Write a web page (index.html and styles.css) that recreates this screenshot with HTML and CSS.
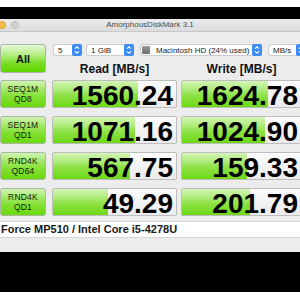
FILE: index.html
```html
<!DOCTYPE html>
<html>
<head>
<meta charset="utf-8">
<link rel="stylesheet" href="styles.css">
</head>
<body>
<div class="top-white"></div>
<div class="black-bar"></div>
<div class="window">
  <div class="titlebar">
    <div class="lights"><span class="light yellow"></span><span class="light gray"></span></div>
    <div class="title">AmorphousDiskMark 3.1</div>
  </div>
  <div class="content">
    <div class="head">
      <div class="all">All</div>
      <div class="controls">
        <div class="selects">
          <div class="sel s-count"><span class="sel-text">5</span><svg class="step" viewBox="0 0 10 12"><rect x="0" y="0" width="10" height="12" rx="2" fill="#3b8cf6"/><path d="M3 4.6 L5 2.8 L7 4.6 M3 7.4 L5 9.2 L7 7.4" fill="none" stroke="#fff" stroke-width="1.1"/></svg></div>
          <div class="sel s-size"><span class="sel-text">1 GiB</span><svg class="step" viewBox="0 0 10 12"><rect x="0" y="0" width="10" height="12" rx="2" fill="#3b8cf6"/><path d="M3 4.6 L5 2.8 L7 4.6 M3 7.4 L5 9.2 L7 7.4" fill="none" stroke="#fff" stroke-width="1.1"/></svg></div>
          <div class="sel s-disk"><span class="disk-icon"></span><span class="sel-text">Macintosh HD (24% used)</span><svg class="step" viewBox="0 0 10 12"><rect x="0" y="0" width="10" height="12" rx="2" fill="#3b8cf6"/><path d="M3 4.6 L5 2.8 L7 4.6 M3 7.4 L5 9.2 L7 7.4" fill="none" stroke="#fff" stroke-width="1.1"/></svg></div>
          <div class="sel s-unit"><span class="sel-text">MB/s</span><svg class="step" viewBox="0 0 10 12"><rect x="0" y="0" width="10" height="12" rx="2" fill="#3b8cf6"/><path d="M3 4.6 L5 2.8 L7 4.6 M3 7.4 L5 9.2 L7 7.4" fill="none" stroke="#fff" stroke-width="1.1"/></svg></div>
        </div>
        <div class="headers"><div>Read [MB/s]</div><div>Write [MB/s]</div></div>
      </div>
    </div>
    <div class="grid">
      <div class="label">SEQ1M<br>QD8</div>
      <div class="val"><div class="bar" style="width:85px"></div><span class="num">1560.24</span></div>
      <div class="val"><div class="bar" style="width:86px"></div><span class="num">1624.78</span></div>

      <div class="label">SEQ1M<br>QD1</div>
      <div class="val"><div class="bar" style="width:82px"></div><span class="num">1071.16</span></div>
      <div class="val"><div class="bar" style="width:83px"></div><span class="num">1024.90</span></div>

      <div class="label">RND4K<br>QD64</div>
      <div class="val"><div class="bar" style="width:77px"></div><span class="num">567.75</span></div>
      <div class="val"><div class="bar" style="width:65px"></div><span class="num">159.33</span></div>

      <div class="label">RND4K<br>QD1</div>
      <div class="val"><div class="bar" style="width:55px"></div><span class="num">49.29</span></div>
      <div class="val"><div class="bar" style="width:68px"></div><span class="num">201.79</span></div>
    </div>
    <div class="field">Force MP510 / Intel Core i5-4278U</div>
  </div>
</div>
<div class="desk"></div>
</body>
</html>
```
FILE: styles.css
```css
html, body {
  margin: 0;
  padding: 0;
}
body {
  width: 300px;
  height: 300px;
  overflow: hidden;
  background: #fff;
  font-family: "Liberation Sans", Arial, sans-serif;
}
.top-white { height: 7px; }
.black-bar { height: 12px; background: #000; }
.window {
  background: #ececec;
  width: 300px;
  overflow: hidden;
}
.titlebar {
  height: 13px;
  box-sizing: border-box;
  display: grid;
  align-items: center;
  background: linear-gradient(#ebebeb, #dcdcdc);
  border-bottom: 1px solid #c8c8c8;
}
.titlebar > * { grid-area: 1 / 1; }
.lights {
  display: flex;
  gap: 5px;
  margin-left: -2px;
  justify-self: start;
}
.light {
  width: 8px;
  height: 8px;
  border-radius: 50%;
  box-sizing: border-box;
}
.yellow { background: #f6bd4c; border: 1px solid #e0a332; }
.gray { background: #d2d2d2; border: 1px solid #bfbfbf; }
.title {
  justify-self: center;
  font-size: 8px;
  line-height: 12px;
  color: #4b4b4b;
}
.content {
  padding-top: 12px;
  padding-bottom: 14px;
}
.head {
  display: grid;
  grid-template-columns: 48px 1fr;
  column-gap: 4px;
  height: 36px;
}
.all {
  width: 46px;
  height: 29px;
  box-sizing: border-box;
  border: 1px solid #a8b8a0;
  border-radius: 3px;
  background: linear-gradient(#e6f9d8 0%, #b6ee86 35%, #76dc1e 70%, #5fd400 100%);
  display: flex;
  align-items: center;
  justify-content: center;
  font-weight: bold;
  font-size: 11px;
  color: #111;
}
.controls {
  display: flex;
  flex-direction: column;
}
.selects {
  display: flex;
  height: 12px;
  margin-left: 1px;
}
.sel {
  height: 12px;
  box-sizing: border-box;
  background: #fff;
  border: 1px solid #cdcdcd;
  border-right: none;
  border-radius: 3px;
  display: flex;
  align-items: center;
  font-size: 8px;
  color: #222;
  flex: none;
}
.sel-text {
  flex: 1;
  padding-left: 4px;
  white-space: nowrap;
}
.step {
  width: 10px;
  height: 12px;
  flex: none;
  margin-top: -1px;
  margin-bottom: -1px;
}
.s-count { width: 29px; }
.s-size { width: 48px; margin-left: 4px; }
.s-disk { width: 122px; margin-left: 6px; }
.s-unit { width: 38px; margin-left: 6px; }
.s-disk .sel-text { padding-left: 6px; }
.disk-icon {
  width: 8px;
  height: 8px;
  margin-left: 1px;
  background: linear-gradient(#9a9a9a, #6d6d6d);
  border-radius: 1px;
  flex: none;
}
.headers {
  display: grid;
  grid-template-columns: 125px 121px;
  column-gap: 4px;
  margin-top: 6px;
  font-weight: bold;
  font-size: 12px;
  line-height: 14px;
  color: #111;
  text-align: center;
}
.grid {
  display: grid;
  grid-template-columns: 48px 125px 121px;
  column-gap: 4px;
  row-gap: 8px;
  grid-auto-rows: 28px;
}
.label {
  width: 46px;
  box-sizing: border-box;
  border: 1px solid #a9b8a2;
  border-radius: 3px;
  background: linear-gradient(#d2f4b4 0%, #a6e970 30%, #84e034 60%, #6ad810 100%);
  font-size: 8.5px;
  line-height: 10px;
  letter-spacing: 0.2px;
  color: #14220a;
  text-align: center;
  display: flex;
  align-items: center;
  justify-content: center;
}
.val {
  display: grid;
  box-sizing: border-box;
  border: 1px solid #bdbdbd;
  border-radius: 2px;
  background: linear-gradient(#fbfbfb, #ebebeb);
}
.val > * { grid-area: 1 / 1; }
.bar {
  justify-self: start;
  height: 100%;
  background: linear-gradient(#d4f4b8 0%, #b2ec80 30%, #8ee246 55%, #6ed816 100%);
}
.num {
  justify-self: end;
  align-self: start;
  font-weight: bold;
  font-size: 28px;
  line-height: 22px;
  padding-top: 4px;
  padding-right: 3px;
  color: #000;
}
.field {
  margin-top: 5px;
  height: 17px;
  box-sizing: border-box;
  background: #fff;
  border-top: 1px solid #d6d6d6;
  border-bottom: 1px solid #d6d6d6;
  font-weight: bold;
  font-size: 11px;
  line-height: 15px;
  padding-left: 1px;
  color: #1a1a1a;
  white-space: nowrap;
}
.desk {
  height: 40px;
  background: #000;
}
```
